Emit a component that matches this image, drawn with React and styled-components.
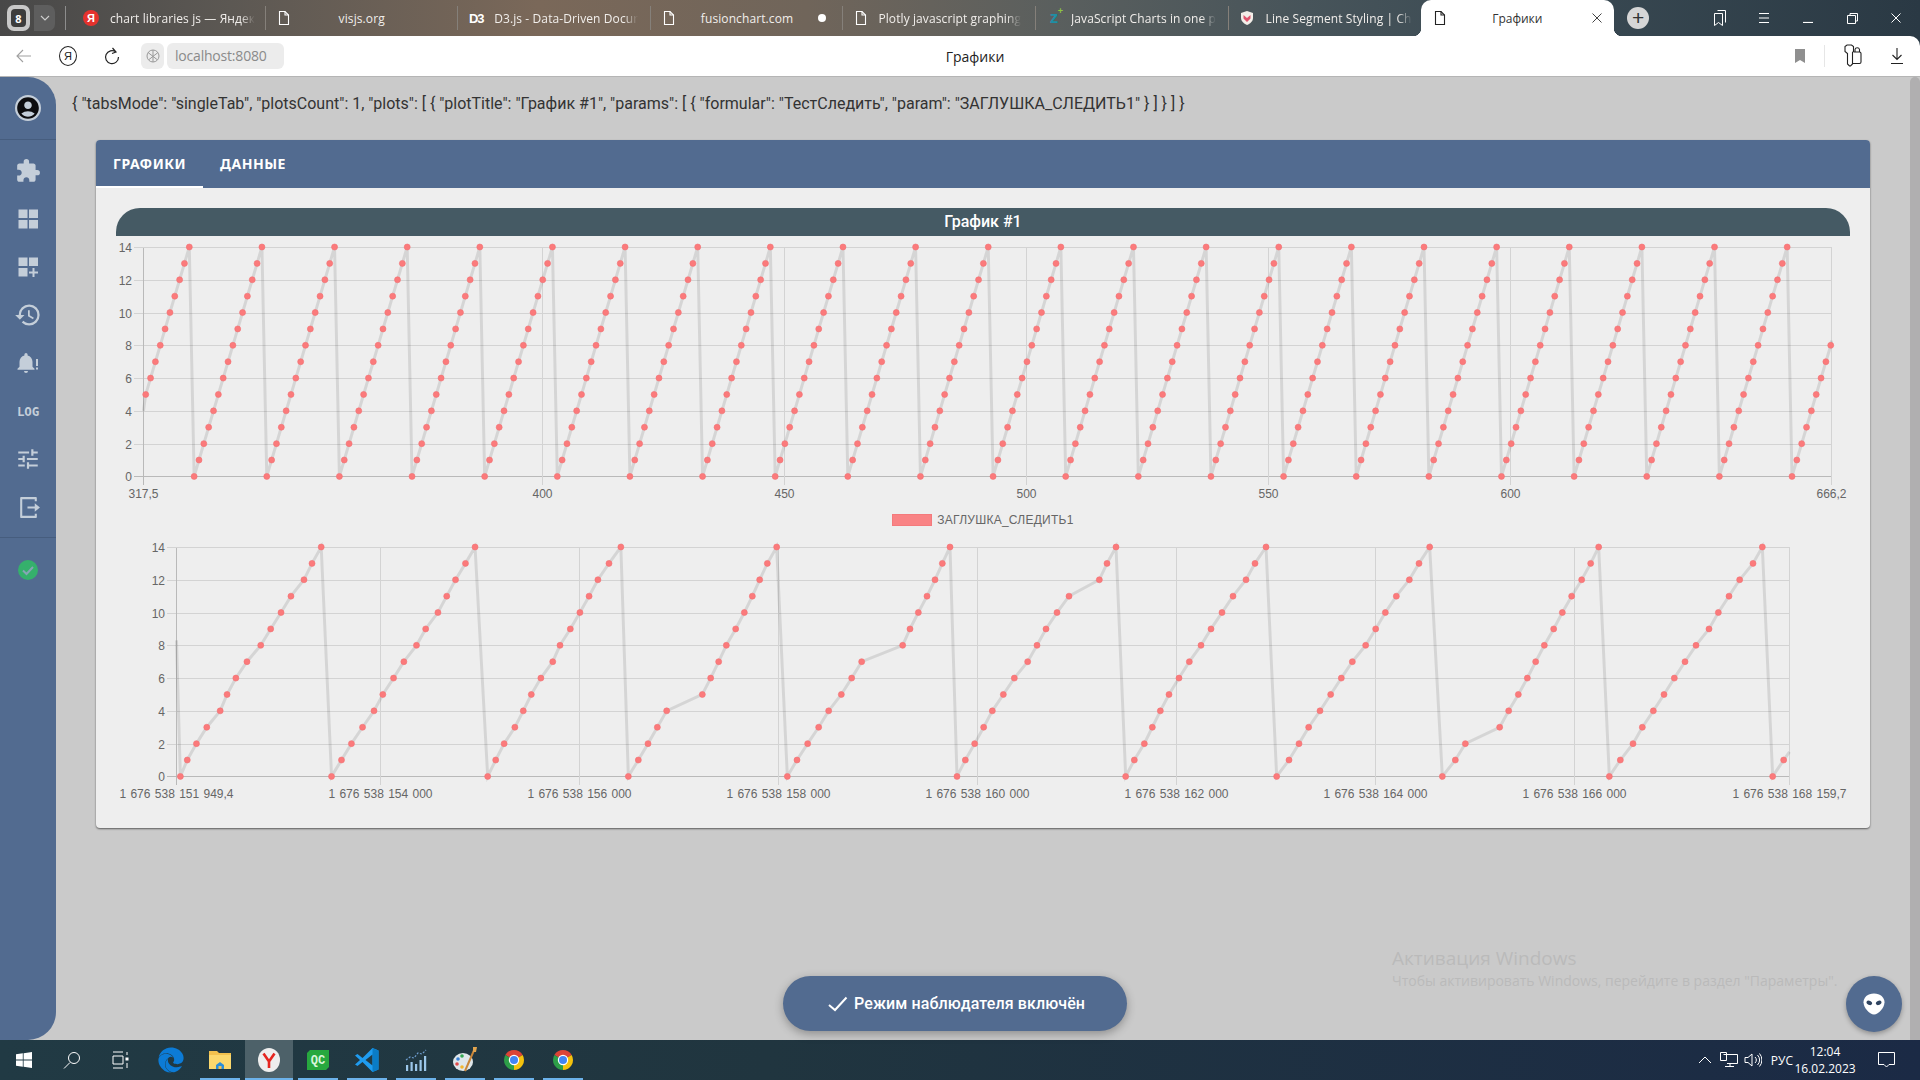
import React from 'react'
import styled, { createGlobalStyle } from 'styled-components'
import { FaEdge } from 'react-icons/fa'
import { MdHistory, MdTune, MdAccountCircle, MdExtension } from 'react-icons/md'
import { RiLogoutBoxRLine } from 'react-icons/ri'

const GlobalStyle = createGlobalStyle`
  html, body {
    margin: 0;
    padding: 0;
    height: 100%;
    overflow: hidden;
    font-family: "Liberation Sans", Arial, sans-serif;
  }
  #root { height: 100%; }
`

/* ---------- chart data, x values are page pixels ---------- */

const fromA = (list) => list.map((z) => 100 + z / 2.613)
const fromB = (list) => list.map((z) => 620 + z / 3)
const fromC = (list) => list.map((z) => 1010 + z / 3)
const fromD = (list) => list.map((z) => 1400 + z / 3)

const secondX = [
  ...fromA([210, 228, 252, 279, 314, 332, 355, 384, 420, 446, 473, 499, 533, 554, 578]),
  ...fromA([605, 631, 657, 686, 716, 739, 767, 794, 827, 851, 883, 906, 929, 955, 980]),
  ...fromA([1013, 1034, 1056, 1084, 1106, 1127, 1152, 1183, 1202, 1229, 1254, 1278, 1301, 1330, 1361]),
  ...fromB([25, 55, 84, 112, 140, 247, 272, 296, 319, 347, 373, 397, 419, 442, 470]),
  ...fromB([502, 531, 563, 596, 626, 664, 695, 725, 848, 870, 895, 921, 945, 967, 990]),
  ...fromB([1011, 1036, 1064, 1091, 1117, 1150, 1183]),
  ...fromC([53, 81, 108, 141, 177, 268, 291, 318]),
  ...fromC([347, 373, 403, 427, 451, 477, 507, 538, 573, 603, 636, 669, 708, 735, 768]),
  ...fromC([800, 837, 867, 896, 930, 962, 994, 1027, 1067, 1097, 1126, 1159]),
  ...fromD([28, 57, 89]),
  ...fromD([127, 166, 196, 299, 326, 355, 382, 407, 433, 461, 487, 515, 545, 572, 596]),
  ...fromD([628, 661, 699, 727, 760, 792, 823, 855, 888, 927, 955, 987, 1019, 1059, 1087]),
  ...fromD([1118, 1151]),
]
const secondPoints = secondX.map((x, i) => ({ x, v: i % 15 }))

const firstPoints = []
for (let t = 318; t <= 666; t++) {
  firstPoints.push({ x: 143.3 + (t - 317.5) * 4.842, v: (t - 313) % 15 })
}

const firstChart = {
  top: 236,
  height: 270,
  left: 143.5,
  right: 1831.5,
  plotTop: 247,
  labelRight: 132,
  labelY: 498,
  start: { x: 143.5, v: 4 },
  end: { x: 1831.5, v: 8.3 },
  points: firstPoints,
  ticks: [
    [143.5, '317,5'],
    [542.5, '400'],
    [784.5, '450'],
    [1026.5, '500'],
    [1268.5, '550'],
    [1510.5, '600'],
    [1831.5, '666,2'],
  ],
}

const secondChart = {
  top: 534,
  height: 294,
  left: 176.5,
  right: 1789.5,
  plotTop: 547,
  labelRight: 165,
  labelY: 798,
  start: { x: 176.5, v: 8.3 },
  end: { x: 1789.5, v: 1.5 },
  points: secondPoints,
  ticks: [
    [176.5, '1 676 538 151 949,4'],
    [380.5, '1 676 538 154 000'],
    [579.5, '1 676 538 156 000'],
    [778.5, '1 676 538 158 000'],
    [977.5, '1 676 538 160 000'],
    [1176.5, '1 676 538 162 000'],
    [1375.5, '1 676 538 164 000'],
    [1574.5, '1 676 538 166 000'],
    [1789.5, '1 676 538 168 159,7'],
  ],
}

const Chart = ({ data }) => {
  const bottom = data.plotTop + 229.4
  const unit = 229.4 / 14
  const yOf = (v) => bottom - v * unit
  const line = [data.start, ...data.points, data.end].map((p) => `${p.x},${yOf(p.v)}`).join(' ')
  const rows = [0, 2, 4, 6, 8, 10, 12, 14]
  return (
    <ChartSvg
      width="1734"
      height={data.height}
      viewBox={`116 ${data.top} 1734 ${data.height}`}
    >
      {rows.map((v) => {
        const y = Math.round(yOf(v)) + 0.5
        return (
          <g key={v}>
            <GridLine x1={data.left - 10} x2={data.right} y1={y} y2={y} $strong={v === 0} />
            <AxisText x={data.labelRight} y={y + 4} textAnchor="end">{v}</AxisText>
          </g>
        )
      })}
      {data.ticks.map(([x, label], i) => (
        <g key={label}>
          <GridLine x1={x} x2={x} y1={data.plotTop + 0.5} y2={bottom + 9} $strong={i === 0} />
          <AxisText x={x} y={data.labelY} textAnchor="middle">{label}</AxisText>
        </g>
      ))}
      <polyline points={line} fill="none" stroke="rgba(0,0,0,0.1)" strokeWidth="3" />
      {data.points.map((p) => (
        <circle key={p.x} cx={p.x} cy={yOf(p.v)} r="3" fill="#fb7a7b" stroke="#f27173" strokeWidth="0.6" />
      ))}
    </ChartSvg>
  )
}

/* ---------- small drawings ---------- */

const DocIcon = ({ color = '#fff' }) => (
  <svg width="16" height="16" viewBox="0 0 16 16" fill="none" stroke={color} strokeWidth="1.1">
    <path d="M3.5 1.5h5.5l3.5 3.5v9.5h-9z" />
    <path d="M9 1.5v3.5h3.5" />
  </svg>
)

const CloseX = ({ color = '#fff', size = 10 }) => (
  <svg width={size} height={size} viewBox="0 0 10 10" stroke={color} strokeWidth="1">
    <path d="M0.5 0.5l9 9M9.5 0.5l-9 9" />
  </svg>
)

const GridIcon = ({ plus }) => (
  <svg width="22" height="22" viewBox="0 0 22 22" fill="#c4ced9">
    <rect x="1.5" y="1.5" width="9" height="8.5" />
    <rect x="12" y="1.5" width="9" height="8.5" />
    <rect x="1.5" y="12" width="9" height="8.5" />
    {plus ? (
      <path d="M15.5 12h2v3.5h3.5v2h-3.5v3.5h-2v-3.5H12v-2h3.500z" />
    ) : (
      <rect x="12" y="12" width="9" height="8.5" />
    )}
  </svg>
)

const BellIcon = () => (
  <svg width="24" height="24" viewBox="0 0 24 24" fill="#c4ced9">
    <path d="M10 2a1.600 1.600 0 0 1 1.600 1.600v.8c2.900.7 4.900 3.300 4.900 6.300v5l2 2v1h-17v-1l2-2v-5c0-3 2-5.600 4.900-6.300v-.8A1.600 1.600 0 0 1 10 2zM8 20h4a2 2 0 0 1-4 0z" />
    <rect x="20" y="8" width="2" height="7" />
    <rect x="20" y="16.500" width="2" height="2" />
  </svg>
)

const StatusIcon = () => (
  <svg width="24" height="24" viewBox="0 0 24 24">
    <circle cx="12" cy="12" r="10" fill="#35b06c" />
    <path d="M7 12.500l3.500 3.500 6.500-7" fill="none" stroke="#86a5b5" strokeWidth="2" />
  </svg>
)

const AlienIcon = () => (
  <svg width="28" height="28" viewBox="0 0 24 24">
    <path d="M12 3C6.500 3 3 6.500 3 10.500 3 15 8 21 12 21s9-6 9-10.500C21 6.500 17.500 3 12 3z" fill="#fff" />
    <ellipse cx="8" cy="11" rx="2.500" ry="1.800" transform="rotate(25 8 11)" fill="#2f4460" />
    <ellipse cx="16" cy="11" rx="2.500" ry="1.800" transform="rotate(-25 16 11)" fill="#2f4460" />
  </svg>
)

const ChromeIcon = () => (
  <svg width="24" height="24" viewBox="0 0 24 24">
    <path d="M12 12L3.340 7A10 10 0 0 1 20.660 7z" fill="#db4437" />
    <path d="M12 12L20.660 7A10 10 0 0 1 12 22z" fill="#f4c20d" />
    <path d="M12 12L12 22A10 10 0 0 1 3.340 7z" fill="#2d9e48" />
    <circle cx="12" cy="12" r="5.200" fill="#fff" />
    <circle cx="12" cy="12" r="4" fill="#4285f4" />
  </svg>
)

const FolderIcon = () => (
  <svg width="24" height="24" viewBox="0 0 24 24">
    <path d="M1 3h8l2 2h12v16H1z" fill="#f2c14e" />
    <rect x="1" y="7" width="22" height="14" fill="#fbd86d" />
    <path d="M8 21v-4l4-3 4 3v4z" fill="#2b8fd8" />
    <rect x="10.500" y="18" width="3" height="3" fill="#f2c14e" />
  </svg>
)

const YandexIcon = () => (
  <svg width="24" height="24" viewBox="0 0 24 24">
    <ellipse cx="12" cy="12" rx="11" ry="12" fill="#eee" />
    <path d="M6.500 5.500l5.500 8 5.500-8M12 13v7" fill="none" stroke="#e52620" strokeWidth="2.600" />
  </svg>
)

const QcIcon = () => (
  <svg width="22" height="20" viewBox="0 0 22 20">
    <path d="M3 0h19v17l-3 3H0V3z" fill="#27a83f" />
    <text x="11" y="14" textAnchor="middle" fontFamily="'Liberation Mono', monospace" fontSize="12" fontWeight="700" fill="#d8f5dc">QC</text>
  </svg>
)

const VsCodeIcon = () => (
  <svg width="26" height="26" viewBox="0 0 26 26">
    <path d="M18.500 1L8.500 11 3.500 7 1 8.500 6 13l-5 4.500L3.500 19l5-4 10 10 6-2.500V3.500z" fill="#1f9cf0" />
    <path d="M18.500 7.500L11.500 13l7 5.500z" fill="#223b45" />
    <path d="M18.500 1l6 2.500v19l-6 2.500z" fill="#0a7cc7" />
  </svg>
)

const BarsIcon = () => (
  <svg width="24" height="24" viewBox="0 0 24 24">
    <g fill="#9cc7ea">
      <rect x="2" y="17" width="2.200" height="6" />
      <rect x="6.500" y="14" width="2.200" height="9" />
      <rect x="11" y="16" width="2.200" height="7" />
      <rect x="15.500" y="12" width="2.200" height="11" />
      <rect x="20" y="8" width="2.200" height="15" />
    </g>
    <path d="M2 12l4-3 4 1 4-5 4 1 4-4" fill="none" stroke="#6f9ed0" strokeWidth="1.200" strokeDasharray="2 1.500" />
  </svg>
)

const PaintIcon = () => (
  <svg width="26" height="28" viewBox="0 0 26 28">
    <ellipse cx="11" cy="16" rx="10" ry="9" fill="#dfe6ea" />
    <circle cx="6" cy="13" r="1.800" fill="#3b82d6" />
    <circle cx="10" cy="10" r="1.800" fill="#35a853" />
    <circle cx="5" cy="18" r="1.800" fill="#e04b4b" />
    <circle cx="10" cy="21" r="1.800" fill="#f2b62f" />
    <path d="M23 2L13 25" stroke="#c8863a" strokeWidth="2" />
    <path d="M21 1h4l-1 5h-3z" fill="#e3a54e" />
  </svg>
)

const Chevron = () => (
  <svg width="10" height="6" viewBox="0 0 10 6" fill="none" stroke="#cfcfcf" strokeWidth="1.100">
    <path d="M1 1l4 4 4-4" />
  </svg>
)

const WinLogo = () => (
  <svg width="16" height="16" viewBox="0 0 16 16" fill="#fff">
    <path d="M0 2.200l6.800-.9v6.300H0zM7.600 1.200L16 0v7.600H7.600zM0 8.400h6.800v6.300L0 13.800zM7.600 8.400H16V16l-8.400-1.200z" />
  </svg>
)

const TrayStroke = ({ w, h, children }) => (
  <svg width={w} height={h} viewBox={`0 0 ${w} ${h}`} fill="none" stroke="#fff" strokeWidth="1">
    {children}
  </svg>
)

const YaBadge = styled.span`
  display: flex;
  align-items: center;
  justify-content: center;
  width: 16px;
  height: 16px;
  border-radius: 50%;
  background: #e5322d;
  color: #fff;
  font: 700 11px "Liberation Sans", sans-serif;
`

const D3Mark = styled.span`
  color: #fff;
  font: 700 13px "Liberation Sans", sans-serif;
  letter-spacing: -1px;
`

const ZMark = styled.span`
  position: relative;
  color: #1f8fa5;
  font: 700 17px/16px "Liberation Sans", sans-serif;

  i {
    position: absolute;
    left: 8px;
    top: -4px;
    color: #8dc63f;
    font: 700 9px "Liberation Sans", sans-serif;
  }
`

/* ---------- tab strip data ---------- */

const tabs = [
  { icon: <YaBadge>Я</YaBadge>, label: 'chart libraries js — Яндек', indent: 11, fade: true },
  { icon: <DocIcon />, label: 'visjs.org', indent: 47 },
  { icon: <D3Mark>D3</D3Mark>, label: 'D3.js - Data-Driven Docur', indent: 10, fade: true },
  { icon: <DocIcon />, label: 'fusionchart.com', indent: 24, dot: true },
  { icon: <DocIcon />, label: 'Plotly javascript graphing', indent: 9, fade: true },
  { icon: <ZMark>z<i>+</i></ZMark>, label: 'JavaScript Charts in one p', indent: 9, fade: true },
  {
    icon: (
      <svg width="16" height="16" viewBox="0 0 16 16">
        <path d="M8 1l6 2v5c0 3-2.500 5.500-6 7-3.500-1.500-6-4-6-7V3z" fill="#f3eee9" />
        <path d="M4.500 5L8 8l3.500-3v3.500L8 12 4.500 8.500z" fill="#e0556e" />
      </svg>
    ),
    label: 'Line Segment Styling | Ch',
    indent: 11,
    fade: true,
  },
]

const taskItems = [
  { key: 'edge', icon: <FaEdge size={26} color="#0c7bd6" />, run: false },
  { key: 'folder', icon: <FolderIcon />, run: true },
  { key: 'yandex', icon: <YandexIcon />, run: true, active: true },
  { key: 'qc', icon: <QcIcon />, run: true },
  { key: 'code', icon: <VsCodeIcon />, run: true },
  { key: 'bars', icon: <BarsIcon />, run: true },
  { key: 'paint', icon: <PaintIcon />, run: true },
  { key: 'chrome1', icon: <ChromeIcon />, run: true },
  { key: 'chrome2', icon: <ChromeIcon />, run: true },
]

const jsonLine =
  '{ "tabsMode": "singleTab", "plotsCount": 1, "plots": [ { "plotTitle": "График #1", "params": [ { "formular": "ТестСледить", "param": "ЗАГЛУШКА_СЛЕДИТЬ1" } ] } ] }'

const App = () => {
  return (
    <>
      <GlobalStyle />
      <Screen>
        <BrowserTop>
          <TabStrip>
            <CountBox>
              <CountInner>8</CountInner>
            </CountBox>
            <MenuBox>
              <Chevron />
            </MenuBox>
            <StripDivider />
            {tabs.map((tab) => (
              <Tab key={tab.label}>
                <TabIcon>{tab.icon}</TabIcon>
                <TabLabel $indent={tab.indent} $fade={tab.fade}>{tab.label}</TabLabel>
                {tab.dot && <TabDot />}
              </Tab>
            ))}
            <ActiveTab>
              <TabIcon>
                <DocIcon color="#222" />
              </TabIcon>
              <ActiveLabel>Графики</ActiveLabel>
              <CloseX color="#444" />
            </ActiveTab>
            <NewTab>+</NewTab>
            <WindowControls>
              <WinSlot>
                <svg width="14" height="18" viewBox="0 0 14 18" fill="none" stroke="#fff" strokeWidth="1">
                  <path d="M4.500 1.500h8v12M1.500 4.500h8v12l-4-3-4 3z" />
                </svg>
              </WinSlot>
              <WinSlot>
                <svg width="12" height="12" viewBox="0 0 12 12" stroke="#fff" strokeWidth="1">
                  <path d="M1 1.500h10M1 6h10M1 10.500h10" />
                </svg>
              </WinSlot>
              <WinSlot>
                <svg width="10" height="10" viewBox="0 0 10 10" stroke="#fff" strokeWidth="1.200">
                  <path d="M0 9.500h10" />
                </svg>
              </WinSlot>
              <WinSlot>
                <svg width="11" height="11" viewBox="0 0 11 11" fill="none" stroke="#fff" strokeWidth="1">
                  <path d="M3 2.500V.5h7.500V8H8.500M.5 2.500h8v8h-8z" />
                </svg>
              </WinSlot>
              <WinSlot>
                <CloseX />
              </WinSlot>
            </WindowControls>
          </TabStrip>

          <AddressBar>
            <AddressLeft>
              <NavSlot>
                <svg width="16" height="14" viewBox="0 0 16 14" fill="none" stroke="#a0a0a0" strokeWidth="1.100">
                  <path d="M15 7H1M7 1L1 7l6 6" />
                </svg>
              </NavSlot>
              <NavSlot>
                <YaRound>Я</YaRound>
              </NavSlot>
              <NavSlot>
                <svg width="16" height="18" viewBox="0 0 16 18" fill="none" stroke="#222" strokeWidth="1.200">
                  <path d="M12 5A6.500 6.500 0 1 0 14.500 10M8.500 1l3.500 4-4 1.500" />
                </svg>
              </NavSlot>
              <SiteChip>
                <svg width="14" height="14" viewBox="0 0 14 14" fill="none" stroke="#999" strokeWidth="1">
                  <circle cx="7" cy="7" r="6" />
                  <path d="M2 3.500l9 7M12 3.500l-9 7M7 1v12" />
                </svg>
              </SiteChip>
              <UrlChip>localhost:8080</UrlChip>
            </AddressLeft>
            <PageTitle>Графики</PageTitle>
            <AddressRight>
              <svg width="12" height="14" viewBox="0 0 12 14" fill="#8f8f8f">
                <path d="M1 0h10v14l-5-3-5 3z" />
              </svg>
              <AddressDivider />
              <NavSlot>
                <svg width="20" height="24" viewBox="0 0 20 24" fill="none" stroke="#222" strokeWidth="1.100">
                  <path d="M4.500 20V9.500l-2.500-2V2.500l2-1.500h4.500l2 1.500v5l-1 1v11.500l-2 2h-1z" />
                  <path d="M11 8h5.500c1 0 1.500.5 1.500 1.500V18c0 1-.5 1.500-1.500 1.500H10" />
                  <path d="M12 8V5.500a2.300 2.300 0 0 1 4.500 0V8" />
                </svg>
              </NavSlot>
              <NavSlot>
                <svg width="14" height="18" viewBox="0 0 14 18" fill="none" stroke="#222" strokeWidth="1.100">
                  <path d="M7 1v11M2.500 8L7 12.500 11.500 8M1 16.500h12" />
                </svg>
              </NavSlot>
            </AddressRight>
          </AddressBar>
        </BrowserTop>

        <PageBody>
          <Sidebar>
            <ProfileBlock>
              <ProfileDot>
                <MdAccountCircle size={30} color="#0d0d0f" />
              </ProfileDot>
            </ProfileBlock>
            <NavList>
              <NavItem><MdExtension size={26} /></NavItem>
              <NavItem><GridIcon /></NavItem>
              <NavItem><GridIcon plus /></NavItem>
              <NavItem><MdHistory size={28} /></NavItem>
              <NavItem><BellIcon /></NavItem>
              <NavItem><LogMark>LOG</LogMark></NavItem>
              <NavItem><MdTune size={26} /></NavItem>
              <NavItem><RiLogoutBoxRLine size={25} /></NavItem>
            </NavList>
            <StatusSlot>
              <StatusIcon />
            </StatusSlot>
          </Sidebar>

          <Main>
            <JsonLine>{jsonLine}</JsonLine>
            <Card>
              <CardTabs>
                <CardTab $active>Графики</CardTab>
                <CardTab>Данные</CardTab>
              </CardTabs>
              <CardContent>
                <PlotTitle>График #1</PlotTitle>
                <Chart data={firstChart} />
                <Legend>
                  <LegendSwatch />
                  <LegendText>ЗАГЛУШКА_СЛЕДИТЬ1</LegendText>
                </Legend>
                <Chart data={secondChart} />
              </CardContent>
            </Card>
          </Main>

          <ScrollThumb />

          <Watermark>
            <WatermarkTitle>Активация Windows</WatermarkTitle>
            <WatermarkNote>Чтобы активировать Windows, перейдите в раздел "Параметры".</WatermarkNote>
          </Watermark>

          <Toast>
            <svg width="20" height="16" viewBox="0 0 20 16" fill="none" stroke="#fff" strokeWidth="2">
              <path d="M1 9l6 5L18.500 1.500" />
            </svg>
            <span>Режим наблюдателя включён</span>
          </Toast>

          <RoundButton>
            <AlienIcon />
          </RoundButton>
        </PageBody>

        <Taskbar>
          <TaskSlot><WinLogo /></TaskSlot>
          <TaskSlot>
            <TrayStroke w={18} h={18}>
              <circle cx="11" cy="7" r="5.500" />
              <path d="M7 11.500L1 17.500" />
            </TrayStroke>
          </TaskSlot>
          <TaskSlot>
            <TrayStroke w={18} h={18}>
              <path d="M2 1h10M2 17h10M2 5h10v8H2z" />
              <rect x="15" y="7" width="2" height="2" fill="#fff" />
              <path d="M16 1v3M16 12v5" />
            </TrayStroke>
          </TaskSlot>
          <TaskApps>
            {taskItems.map((item) => (
              <TaskApp key={item.key} $active={item.active} $run={item.run}>
                {item.icon}
              </TaskApp>
            ))}
          </TaskApps>
          <Tray>
            <TrayIcon $w={24}>
              <TrayStroke w={14} h={8}>
                <path d="M1 7l6-6 6 6" />
              </TrayStroke>
            </TrayIcon>
            <TrayIcon $w={24}>
              <TrayStroke w={18} h={16}>
                <path d="M3.500 2.500H17.500v9H7M10 11.500v3M5 14.500h9M.5.500h6v8h-6z" />
              </TrayStroke>
            </TrayIcon>
            <TrayIcon $w={24}>
              <TrayStroke w={18} h={16}>
                <path d="M1 5.500h3L8 2v12L4 10.500H1zM11 5a4 4 0 0 1 0 6M13.500 3a7 7 0 0 1 0 10M15.500 1.500a10 10 0 0 1 0 13" />
              </TrayStroke>
            </TrayIcon>
            <LangMark>РУС</LangMark>
            <Clock>
              <span>12:04</span>
              <span>16.02.2023</span>
            </Clock>
            <TrayIcon $w={36}>
              <TrayStroke w={18} h={17}>
                <path d="M.5.500h16v12h-5.500L8.500 15 6 12.500H.5z" />
              </TrayStroke>
            </TrayIcon>
          </Tray>
        </Taskbar>
      </Screen>
    </>
  )
}

/* ---------- layout ---------- */

const Screen = styled.div`
  display: flex;
  flex-direction: column;
  height: 100vh;
  width: 1920px;
`

const BrowserTop = styled.header`
  flex: none;
  background: linear-gradient(90deg, #484848 0%, #5c5853 12%, #7a6859 28%, #70655a 42%, #5a5f5e 55%, #47545a 68%, #3a4a53 80%, #2a3944 100%);
`

const TabStrip = styled.div`
  display: flex;
  align-items: center;
  height: 36px;
  padding-left: 7px;
  color: #fff;
`

const CountBox = styled.div`
  display: flex;
  align-items: center;
  justify-content: center;
  width: 23px;
  height: 26px;
  border-radius: 7px;
  background: #c8c8c8;
`

const CountInner = styled.span`
  display: flex;
  align-items: center;
  justify-content: center;
  width: 15px;
  height: 18px;
  border-radius: 4px;
  background: #3d3d3d;
  color: #fff;
  font: 700 11px "Open Sans", sans-serif;
`

const MenuBox = styled.div`
  display: flex;
  align-items: center;
  justify-content: center;
  width: 21px;
  height: 26px;
  margin-left: 4px;
  border-radius: 0 7px 7px 0;
  background: #5e5e5e;
`

const StripDivider = styled.i`
  width: 1px;
  height: 24px;
  margin: 0 7px 0 10px;
  background: #8d8d8d;
`

const Tab = styled.div`
  position: relative;
  display: flex;
  align-items: center;
  box-sizing: border-box;
  width: 192.6px;
  height: 24px;
  padding-left: 10px;
  border-right: 1px solid #85807a;
  font: 12px "Open Sans", sans-serif;
  letter-spacing: 0.1px;

  &:nth-of-type(9) {
    border-right: none;
  }
`

const TabIcon = styled.span`
  display: flex;
  align-items: center;
  justify-content: center;
  flex: none;
  width: 16px;
  height: 16px;
`

const TabLabel = styled.span`
  margin-left: ${(p) => p.$indent}px;
  white-space: nowrap;
  color: #f1eeeb;
  mask-image: ${(p) => (p.$fade ? 'linear-gradient(90deg, #000 90%, transparent)' : 'none')};
`

const TabDot = styled.i`
  position: absolute;
  right: 16px;
  top: 8px;
  width: 8px;
  height: 8px;
  border-radius: 50%;
  background: #fff;
`

const ActiveTab = styled.div`
  position: relative;
  display: flex;
  align-items: center;
  box-sizing: border-box;
  width: 193px;
  height: 36px;
  padding: 0 12px 0 11px;
  border-radius: 10px 10px 0 0;
  background: #fff;

  &::before,
  &::after {
    content: '';
    position: absolute;
    bottom: 0;
    width: 8px;
    height: 8px;
  }
  &::before {
    left: -8px;
    background: radial-gradient(circle at 0 0, transparent 8px, #fff 8.5px);
  }
  &::after {
    right: -8px;
    background: radial-gradient(circle at 100% 0, transparent 8px, #fff 8.5px);
  }
`

const ActiveLabel = styled.span`
  flex: 1;
  margin-left: 44px;
  color: #333;
  font: 12px "Open Sans", sans-serif;
`

const NewTab = styled.div`
  display: flex;
  align-items: center;
  justify-content: center;
  width: 22px;
  height: 22px;
  margin-left: 13px;
  border-radius: 50%;
  background: #d6d6d6;
  color: #333;
  font: 300 21px/22px "Liberation Sans", sans-serif;
`

const WindowControls = styled.div`
  display: flex;
  align-items: center;
  margin-left: auto;
  padding-right: 2px;
`

const WinSlot = styled.span`
  display: flex;
  align-items: center;
  justify-content: center;
  width: 44px;
`

const AddressBar = styled.div`
  display: grid;
  grid-template-columns: 925px 100px 1fr;
  align-items: center;
  height: 40px;
  border-bottom: 1px solid #b5b5b5;
  border-top-right-radius: 10px;
  background: #fff;
`

const AddressLeft = styled.div`
  display: flex;
  align-items: center;
  padding-left: 2px;
`

const NavSlot = styled.span`
  display: flex;
  align-items: center;
  justify-content: center;
  width: 44px;
`

const YaRound = styled.span`
  display: flex;
  align-items: center;
  justify-content: center;
  width: 16px;
  height: 18px;
  border: 1.200px solid #222;
  border-radius: 50%;
  color: #222;
  font: 11px "Liberation Sans", sans-serif;
`

const SiteChip = styled.span`
  display: flex;
  align-items: center;
  justify-content: center;
  width: 23px;
  height: 26px;
  margin-left: 7px;
  border-radius: 6px;
  background: #ececec;
`

const UrlChip = styled.span`
  box-sizing: border-box;
  width: 117px;
  height: 26px;
  margin-left: 3px;
  padding-left: 8px;
  border-radius: 6px;
  background: #ececec;
  color: #8a8a8a;
  font: 14px/26px "Open Sans", sans-serif;
  letter-spacing: -0.2px;
`

const PageTitle = styled.span`
  text-align: center;
  color: #222;
  font: 14px "Open Sans", sans-serif;
`

const AddressRight = styled.div`
  display: flex;
  align-items: center;
  justify-content: flex-end;
  padding-right: 1px;
`

const AddressDivider = styled.i`
  width: 1px;
  height: 22px;
  margin: 0 6px 0 18px;
  background: #e6e6e6;
`

const PageBody = styled.div`
  position: relative;
  display: flex;
  flex: 1;
  min-height: 0;
  background: #cacaca;
`

const Sidebar = styled.nav`
  display: flex;
  flex-direction: column;
  flex: none;
  width: 56px;
  border-radius: 0 28px 28px 0;
  background: #526b90;
`

const ProfileBlock = styled.div`
  display: flex;
  align-items: center;
  justify-content: center;
  height: 62px;
  border-bottom: 1px solid #465d7e;
`

const ProfileDot = styled.span`
  display: flex;
  align-items: center;
  justify-content: center;
  width: 26px;
  height: 26px;
  border-radius: 50%;
  background: #c4ced9;
  overflow: hidden;
`

const NavList = styled.div`
  display: flex;
  flex-direction: column;
  padding: 7px 0 6px;
  border-bottom: 1px solid #465d7e;
`

const NavItem = styled.span`
  display: flex;
  align-items: center;
  justify-content: center;
  height: 48px;
  color: #c4ced9;
`

const LogMark = styled.span`
  font: 700 12.500px "DejaVu Sans Mono", monospace;
  letter-spacing: -0.2px;
`

const StatusSlot = styled.div`
  display: flex;
  align-items: center;
  justify-content: center;
  height: 48px;
  margin-top: 8px;
`

const Main = styled.main`
  display: flex;
  flex-direction: column;
  flex: 1;
  min-width: 0;
  padding: 15px 40px 0;
`

const JsonLine = styled.div`
  height: 24px;
  margin-left: -24px;
  color: #333;
  font: 16px/24px Roboto, sans-serif;
  white-space: nowrap;
`

const Card = styled.section`
  margin-top: 24px;
  height: 688px;
  border-radius: 4px;
  background: #eee;
  box-shadow: 0 1px 2px rgba(0, 0, 0, 0.55);
`

const CardTabs = styled.div`
  display: flex;
  height: 48px;
  border-radius: 4px 4px 0 0;
  background: #526b90;
`

const CardTab = styled.div`
  box-sizing: border-box;
  padding: 0 17px;
  border-bottom: 2px solid ${(p) => (p.$active ? '#fff' : 'transparent')};
  color: #fff;
  font: 700 14px/48px "Noto Sans", sans-serif;
  letter-spacing: 0.5px;
  text-transform: uppercase;
`

const CardContent = styled.div`
  display: flex;
  flex-direction: column;
  padding: 20px 20px 0;
`

const PlotTitle = styled.div`
  height: 28px;
  border-radius: 24px 24px 0 0;
  background: #455a64;
  color: #fff;
  text-align: center;
  font: 500 16px/28px Roboto, sans-serif;
`

const ChartSvg = styled.svg`
  display: block;
  flex: none;
`

const GridLine = styled.line`
  stroke: ${(p) => (p.$strong ? '#b9b9b9' : '#d3d3d3')};
  stroke-width: 1;
  shape-rendering: crispEdges;
`

const AxisText = styled.text`
  fill: #666;
  font: 12px "Liberation Sans", sans-serif;
  word-spacing: 1px;
`

const Legend = styled.div`
  display: flex;
  align-items: center;
  justify-content: center;
  gap: 5px;
  height: 28px;
`

const LegendSwatch = styled.i`
  width: 40px;
  height: 12px;
  background: #f98385;
  border: 1px solid #f47a7c;
  box-sizing: border-box;
`

const LegendText = styled.span`
  color: #666;
  font: 12px "Liberation Sans", sans-serif;
  letter-spacing: 0.25px;
`

const ScrollThumb = styled.div`
  flex: none;
  width: 10px;
  border-radius: 5px 5px 0 0;
  background: #b0afb0;
`

const Watermark = styled.div`
  position: absolute;
  left: 1392px;
  top: 868px;
  color: #bababa;
  font-family: "Open Sans", sans-serif;
  white-space: nowrap;
`

const WatermarkTitle = styled.div`
  font-size: 19px;
  line-height: 26px;
`

const WatermarkNote = styled.div`
  font-size: 14px;
  line-height: 20px;
`

const Toast = styled.div`
  position: absolute;
  left: 783px;
  top: 899px;
  display: flex;
  align-items: center;
  gap: 6px;
  box-sizing: border-box;
  width: 344px;
  height: 55px;
  padding: 0 0 0 45px;
  border-radius: 28px;
  background: #526b90;
  box-shadow: 0 3px 10px rgba(0, 0, 0, 0.3);
  color: #fff;
  font: 500 16px Roboto, sans-serif;
  letter-spacing: 0.1px;
`

const RoundButton = styled.div`
  position: absolute;
  left: 1846px;
  top: 899px;
  display: flex;
  align-items: center;
  justify-content: center;
  width: 56px;
  height: 56px;
  border-radius: 50%;
  background: #526b90;
  box-shadow: 0 2px 5px rgba(0, 0, 0, 0.3);
`

const Taskbar = styled.footer`
  display: flex;
  align-items: stretch;
  flex: none;
  height: 40px;
  background: linear-gradient(90deg, #213a44 0%, #20353f 40%, #1b2a45 100%);
`

const TaskSlot = styled.span`
  display: flex;
  align-items: center;
  justify-content: center;
  width: 48px;
`

const TaskApps = styled.div`
  display: flex;
  margin-left: 3px;
`

const TaskApp = styled.span`
  position: relative;
  display: flex;
  align-items: center;
  justify-content: center;
  width: 48px;
  margin-right: 1px;
  background: ${(p) => (p.$active ? '#4d6169' : 'transparent')};

  &::after {
    content: '';
    display: ${(p) => (p.$run ? 'block' : 'none')};
    position: absolute;
    bottom: 0;
    left: ${(p) => (p.$active ? 0 : '4px')};
    right: ${(p) => (p.$active ? 0 : '4px')};
    height: 2px;
    background: #6cb2ea;
  }
`

const Tray = styled.div`
  display: flex;
  align-items: center;
  margin-left: auto;
  padding-right: 15px;
  color: #fff;
`

const TrayIcon = styled.span`
  display: flex;
  align-items: center;
  justify-content: center;
  width: ${(p) => p.$w}px;
`

const LangMark = styled.span`
  margin-left: 6px;
  font: 12px "Open Sans", sans-serif;
`

const Clock = styled.div`
  display: flex;
  flex-direction: column;
  align-items: center;
  width: 60px;
  margin-left: 2px;
  margin-right: 14px;
  font: 12px/17px "Open Sans", sans-serif;
`

export default App
